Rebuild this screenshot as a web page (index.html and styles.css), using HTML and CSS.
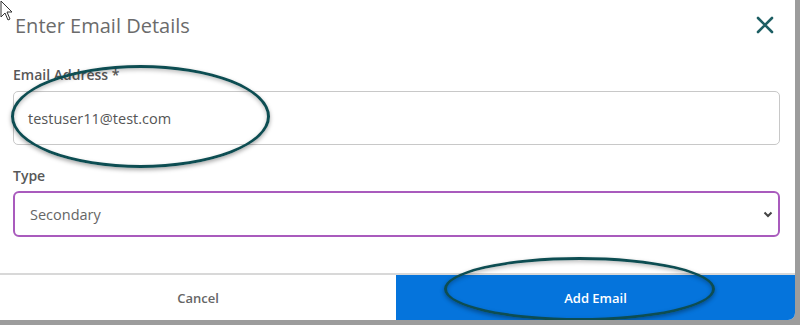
FILE: index.html
```html
<!DOCTYPE html>
<html>
<head>
<meta charset="utf-8">
<link rel="stylesheet" href="styles.css">
</head>
<body>
<div class="dialog">
  <div class="header">
    <h1 class="title">Enter Email Details</h1>
    <button class="close" aria-label="Close">
      <svg width="18" height="18" viewBox="0 0 18 18"><path d="M2 2 L16 16 M16 2 L2 16" stroke="#1d5e63" stroke-width="2.6" stroke-linecap="round"/></svg>
    </button>
  </div>
  <div class="body">
    <label class="label">Email Address *</label>
    <div class="input">testuser11@test.com</div>
    <label class="label type-label">Type</label>
    <div class="select">
      <span>Secondary</span>
      <svg width="10" height="7" viewBox="0 0 10 7"><path d="M1.5 1.5 L5 5 L8.5 1.5" fill="none" stroke="#444" stroke-width="2"/></svg>
    </div>
  </div>
  <div class="footer">
    <button class="btn cancel">Cancel</button>
    <button class="btn primary">Add Email</button>
  </div>
  <svg class="cursor" width="14" height="22" viewBox="0 0 14 22"><path d="M1 1 L1 17 L5 13 L8 20 L10 19 L7 12 L12 12 Z" fill="#fff" stroke="#333" stroke-width="1"/></svg>
  <div class="ring ring1"></div>
  <div class="ring ring2"></div>
</div>
</body>
</html>
```

FILE: styles.css
```css
html, body { margin: 0; padding: 0; }
body {
  width: 800px;
  height: 325px;
  background: #9c9c9c;
  font-family: "Open Sans", "Liberation Sans", sans-serif;
  overflow: hidden;
}
.dialog {
  position: relative;
  width: 795px;
  height: 320px;
  background: #fff;
  border-bottom-right-radius: 7px;
  display: flex;
  flex-direction: column;
  overflow: hidden;
}
.header {
  display: flex;
  align-items: center;
  justify-content: space-between;
  padding: 7px 21px 0 15px;
  height: 36px;
}
.title {
  margin: 0;
  font-size: 20px;
  font-weight: 400;
  color: #6b6b6b;
}
.close {
  border: 0;
  background: none;
  padding: 0;
  width: 18px;
  height: 18px;
  display: flex;
}
.body {
  flex: 1;
  padding: 23px 15px 0 13px;
  display: flex;
  flex-direction: column;
}
.label {
  font-size: 14px;
  font-weight: 600;
  color: #585858;
  line-height: 18px;
}
.input {
  margin-top: 7px;
  height: 52px;
  border: 1px solid #c8c8c8;
  border-radius: 5px;
  padding-left: 14px;
  display: flex;
  align-items: center;
  font-size: 14.5px;
  color: #555;
}
.type-label { margin-top: 22px; }
.select {
  margin-top: 6px;
  height: 42px;
  border: 2px solid #a95bbd;
  border-radius: 6px;
  padding: 0 5px 0 15px;
  display: flex;
  align-items: center;
  justify-content: space-between;
  font-size: 14.5px;
  color: #666;
}
.footer {
  display: flex;
  border-top: 2px solid #d8d8d8;
  height: 45px;
}
.btn {
  flex: 1;
  border: 0;
  margin: 0;
  font-family: inherit;
  font-size: 13px;
  font-weight: 600;
}
.cancel { background: #fff; color: #666; flex: 0 0 396px; }
.primary { background: #0574dc; color: #fff; }
.cursor { position: absolute; left: 0; top: 0; }
.ring {
  position: absolute;
  border: 3px solid #0d4d52;
  border-radius: 50%;
  box-shadow: 0 2px 4px rgba(0,0,0,0.35), inset 0 2px 4px rgba(0,0,0,0.25);
}
.ring1 { left: 11px; top: 65px; width: 253px; height: 97px; }
.ring2 { left: 444px; top: 257px; width: 265px; height: 58px; }
```
